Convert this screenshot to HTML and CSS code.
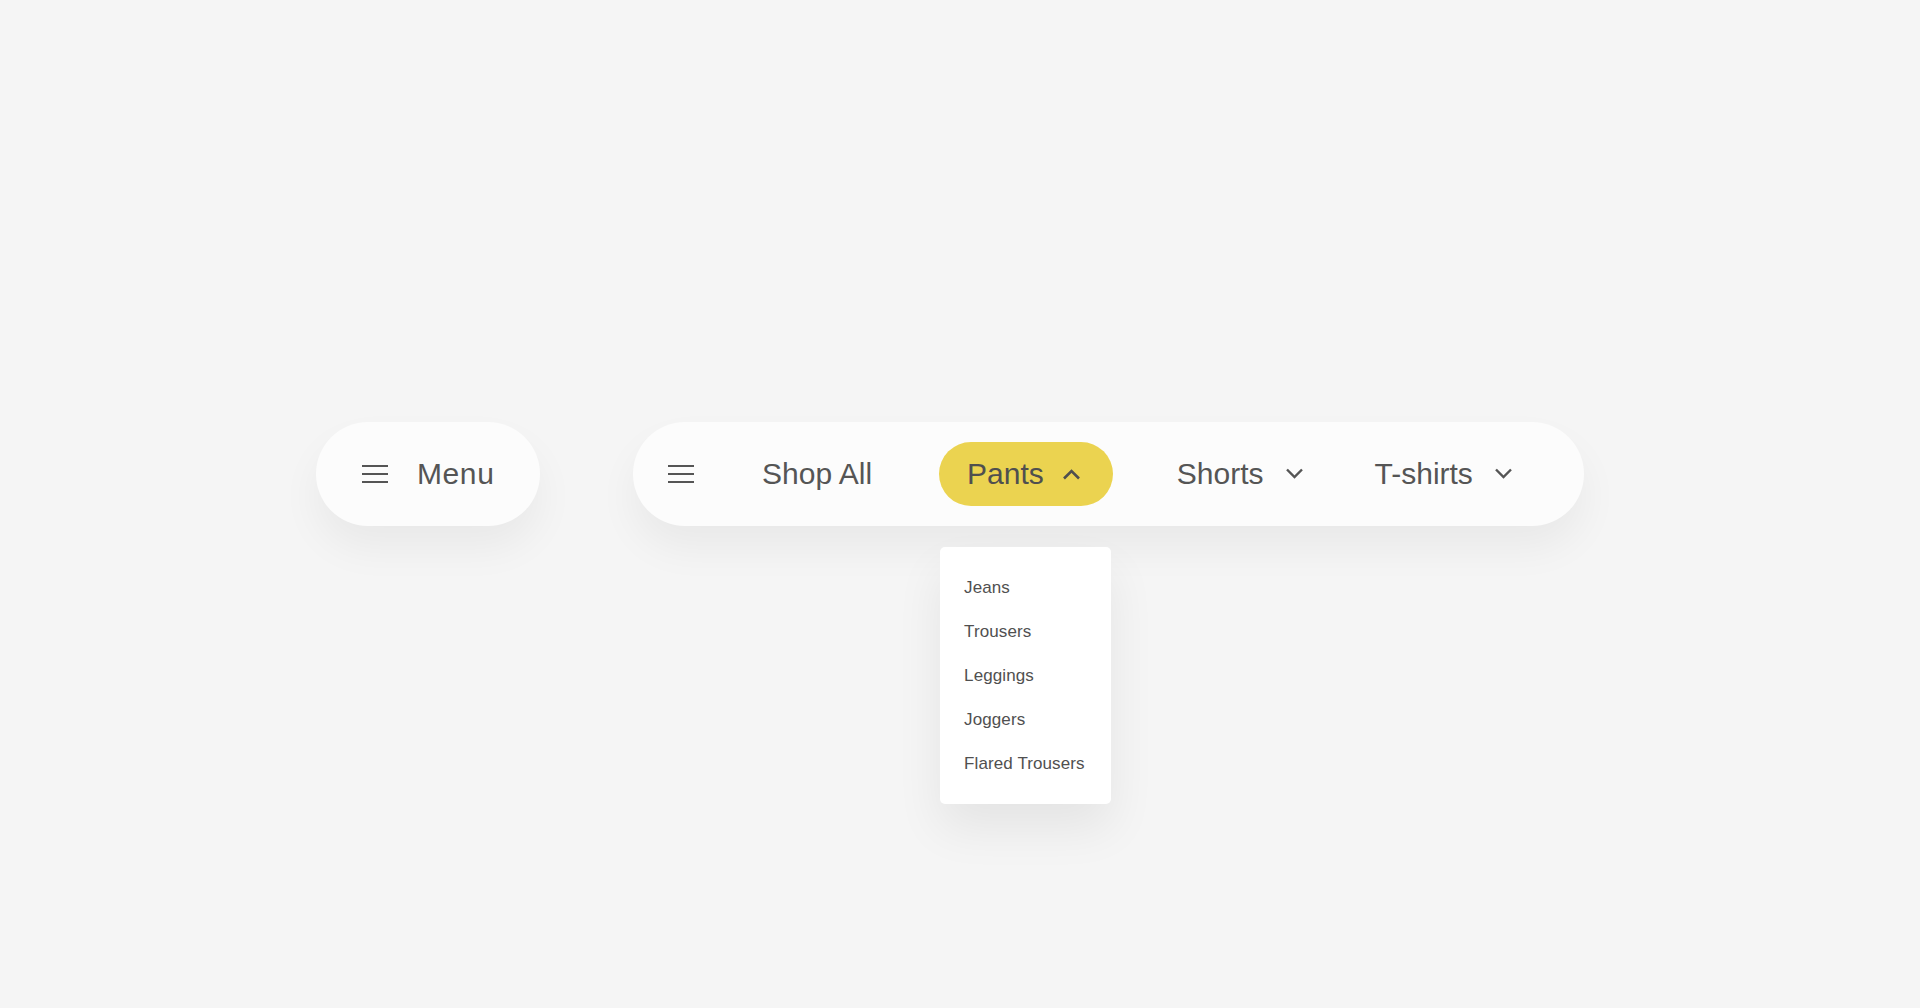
FILE: index.html
```html
<!DOCTYPE html>
<html lang="en">
<head>
<meta charset="utf-8">
<title>Navigation</title>
<link rel="stylesheet" href="styles.css">
</head>
<body>
<main class="stage">
  <button class="menu-pill" type="button">
    <svg class="burger" width="26" height="18" viewBox="0 0 26 18" aria-hidden="true"><path d="M0 1H26M0 9H26M0 17H26" stroke="#555" stroke-width="2" fill="none"/></svg>
    <span>Menu</span>
  </button>
  <nav class="nav-pill">
    <button class="burger-btn" type="button">
      <svg class="burger" width="26" height="18" viewBox="0 0 26 18" aria-hidden="true"><path d="M0 1H26M0 9H26M0 17H26" stroke="#555" stroke-width="2" fill="none"/></svg>
    </button>
    <a class="item item-shop">Shop All</a>
    <div class="item item-pants active">
      <span>Pants</span>
      <svg class="chev" width="19" height="12" viewBox="0 0 19 12" aria-hidden="true"><path d="M2 10.5L9.5 3L17 10.5" stroke="#4f4f4f" stroke-width="2.6" fill="none"/></svg>
      <ul class="dropdown">
        <li>Jeans</li>
        <li>Trousers</li>
        <li>Leggings</li>
        <li>Joggers</li>
        <li>Flared Trousers</li>
      </ul>
    </div>
    <div class="item item-shorts">
      <span>Shorts</span>
      <svg class="chev" width="19" height="12" viewBox="0 0 19 12" aria-hidden="true"><path d="M2 1.5L9.5 9L17 1.5" stroke="#555" stroke-width="2.4" fill="none"/></svg>
    </div>
    <div class="item item-tshirts">
      <span>T-shirts</span>
      <svg class="chev" width="19" height="12" viewBox="0 0 19 12" aria-hidden="true"><path d="M2 1.5L9.5 9L17 1.5" stroke="#555" stroke-width="2.4" fill="none"/></svg>
    </div>
  </nav>
</main>
</body>
</html>
```

FILE: styles.css
```css
* { box-sizing: border-box; }
html, body {
  margin: 0;
  height: 100%;
  background: #f5f5f5;
  font-family: "Liberation Sans", Arial, sans-serif;
  color: #555555;
}
.stage {
  display: flex;
  align-items: flex-start;
  padding: 422px 0 0 316px;
  gap: 93px;
}
button {
  font: inherit;
  color: inherit;
  border: 0;
  background: none;
  padding: 0;
  cursor: pointer;
}
.menu-pill {
  display: flex;
  align-items: center;
  gap: 29px;
  width: 224px;
  height: 104px;
  padding: 0 0 0 46px;
  border-radius: 52px;
  background: #fcfcfc;
  box-shadow: 0 22px 40px rgba(0, 0, 0, 0.05);
  font-size: 30px;
  line-height: 1;
  letter-spacing: 0.6px;
}
.burger { display: block; }
.nav-pill {
  display: flex;
  align-items: center;
  width: 951px;
  height: 104px;
  padding: 0 36px 0 35px;
  border-radius: 52px;
  background: #fcfcfc;
  box-shadow: 0 22px 40px rgba(0, 0, 0, 0.05);
  font-size: 30px;
  line-height: 1;
}
.burger-btn { display: flex; align-items: center; }
.item {
  position: relative;
  display: flex;
  align-items: center;
  gap: 21px;
  height: 64px;
  padding: 0 32px 0 28px;
  border-radius: 32px;
  white-space: nowrap;
}
.item-shop { margin-left: 40px; padding: 0 28px; }
.item-pants { margin-left: 39px; gap: 18px; }
.item-shorts { margin-left: 36px; }
.item-tshirts { margin-left: 11px; }
.chev { display: block; }
.active {
  background: #ebd350;
  color: #4f4f4f;
}
.dropdown {
  position: absolute;
  top: calc(100% + 41px);
  left: 1px;
  width: 171px;
  margin: 0;
  padding: 19px 0 18px 24px;
  list-style: none;
  background: #ffffff;
  border-radius: 5px;
  box-shadow: 0 24px 48px rgba(0, 0, 0, 0.07);
  font-size: 17px;
  line-height: 44px;
  color: #505050;
  letter-spacing: 0.1px;
}
```
